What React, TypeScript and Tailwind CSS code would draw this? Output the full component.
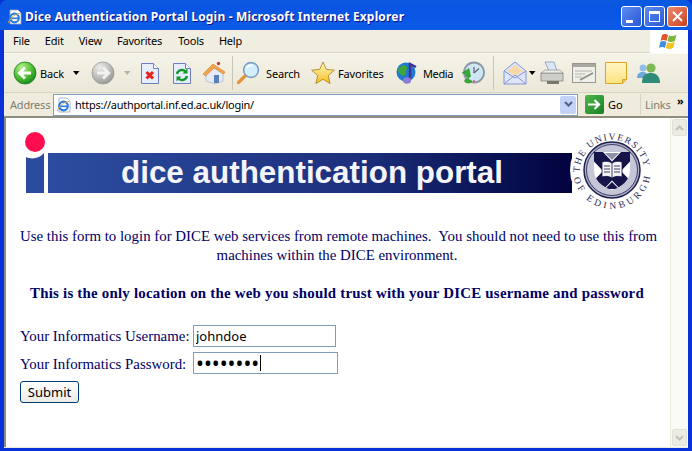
// Internet Explorer 6 on XP showing the DICE authentication portal login page
import type { ReactNode } from 'react'

const UI_FONT = "font-['Noto_Sans','DejaVu_Sans',sans-serif]"

function Icon({ w = 24, h = 24, className = '', children }: { w?: number; h?: number; className?: string; children: ReactNode }) {
  return (
    <svg width={w} height={h} viewBox={`0 0 ${w} ${h}`} className={`shrink-0 ${className}`}>
      {children}
    </svg>
  )
}

function IeLogo({ size = 16 }: { size?: number }) {
  return (
    <svg width={size} height={size} viewBox="0 0 16 16" className="shrink-0">
      <path d="M3 1h8l3 3v11H3z" fill="#fff" stroke="#8fa3c8" strokeWidth="0.8" />
      <circle cx="7.500" cy="9" r="4.300" fill="none" stroke="#2a7de1" strokeWidth="2.200" />
      <path d="M3.500 9.300h8" stroke="#2a7de1" strokeWidth="1.600" />
      <path d="M1 14c3-6 7-9 12-9.500" fill="none" stroke="#e8a33a" strokeWidth="1" />
    </svg>
  )
}

function RoundArrow({ disabled }: { disabled?: boolean }) {
  const id = disabled ? 'fwd' : 'back'
  return (
    <Icon w={24} h={24}>
      <defs>
        <radialGradient id={id} cx="0.35" cy="0.25" r="0.85">
          <stop offset="0" stopColor={disabled ? '#ececea' : '#b6f08a'} />
          <stop offset="0.6" stopColor={disabled ? '#b8b8b4' : '#46b82e'} />
          <stop offset="1" stopColor={disabled ? '#8f8f8c' : '#0f7d1c'} />
        </radialGradient>
      </defs>
      <circle cx="12" cy="12" r="11" fill={`url(#${id})`} stroke={disabled ? '#9a9a96' : '#1a7a1e'} strokeWidth="0.8" />
      {disabled ? (
        <path d="M6 12h11M12 6.500 17.500 12 12 17.500" fill="none" stroke="#f2f2f0" strokeWidth="3" />
      ) : (
        <path d="M18 12H7M12 6.500 6.500 12 12 17.500" fill="none" stroke="#fff" strokeWidth="3" />
      )}
    </Icon>
  )
}

function Caret({ dim }: { dim?: boolean }) {
  return (
    <Icon w={7} h={4}>
      <path d="M0 0h6.500L3.200 4z" fill={dim ? '#b5b3a6' : '#000'} />
    </Icon>
  )
}

function StopIcon() {
  return (
    <Icon w={20} h={24}>
      <path d="M1.500 2.500h12l5 5v15h-17z" fill="#e6eefb" stroke="#6d7fc0" />
      <path d="M13.500 2.500v5h5" fill="#fff" stroke="#6d7fc0" />
      <path d="M6.500 11l6.500 6.500M13 11l-6.500 6.500" stroke="#e8221a" strokeWidth="3" />
    </Icon>
  )
}

function RefreshIcon() {
  return (
    <Icon w={20} h={24}>
      <path d="M1.500 2.500h12l5 5v15h-17z" fill="#e6eefb" stroke="#6d7fc0" />
      <path d="M13.500 2.500v5h5" fill="#fff" stroke="#6d7fc0" />
      <path d="M5 13a5 5 0 0 1 8.500-2.500M15 15a5 5 0 0 1-8.500 2.500" fill="none" stroke="#12982a" strokeWidth="2.400" />
      <path d="M15.500 7.500v5h-5zM4.500 20.500v-5h5z" fill="#12982a" />
    </Icon>
  )
}

function HomeIcon() {
  return (
    <Icon w={24} h={24}>
      <path d="M4 12v8l9 3 8-3v-9l-8-5z" fill="#e4ebf7" stroke="#9aa8c4" strokeWidth="0.6" />
      <path d="M1 13 11 3l12 8-1.500 2L12 7l-8.500 8z" fill="#f3a64e" stroke="#d9822f" strokeWidth="0.7" />
      <circle cx="16.500" cy="2.500" r="1.700" fill="#b8452e" />
      <rect x="12" y="14" width="5" height="8" fill="#5c7fb8" />
    </Icon>
  )
}

function SearchIcon() {
  return (
    <Icon w={24} h={24}>
      <path d="M10 14 2.500 21.500" stroke="#e0953c" strokeWidth="3.200" strokeLinecap="round" />
      <circle cx="15" cy="9" r="7.400" fill="#d4eefb" stroke="#7c9fc4" strokeWidth="1.600" />
      <path d="M11 7a5 5 0 0 1 5-2.500" fill="none" stroke="#fff" strokeWidth="1.800" />
    </Icon>
  )
}

function StarIcon() {
  return (
    <Icon w={24} h={24}>
      <defs>
        <linearGradient id="star" x1="0" y1="0" x2="0" y2="1">
          <stop offset="0" stopColor="#fffbc0" />
          <stop offset="1" stopColor="#f6bd22" />
        </linearGradient>
      </defs>
      <path d="M12 1l3.300 7.400 8 .8-6 5.300 1.800 8L12 18.300l-7.100 4.200 1.800-8-6-5.300 8-.8z" fill="url(#star)" stroke="#a87a14" strokeWidth="0.8" />
    </Icon>
  )
}

function MediaIcon() {
  return (
    <Icon w={24} h={24}>
      <circle cx="10" cy="11" r="9.500" fill="#1f78d1" />
      <path d="M3 7c3-4 7-3 8-1s-2 4-1 6-3 4-5 2-4-5-2-7z" fill="#3fa53a" />
      <path d="M14 19V3l6 3" fill="none" stroke="#43358f" strokeWidth="2.400" />
      <ellipse cx="11" cy="19.500" rx="4" ry="3.200" fill="#8d7bd8" />
    </Icon>
  )
}

function HistoryIcon() {
  return (
    <Icon w={24} h={24}>
      <circle cx="13" cy="11.500" r="10" fill="#cfe6f5" stroke="#8b97a6" strokeWidth="1.800" />
      <path d="M13 12l5-4.500" stroke="#58616d" strokeWidth="1.200" />
      <path d="M13 12v-6" stroke="#58616d" strokeWidth="1.200" />
      <circle cx="13" cy="20" r="1" fill="#d8553a" />
      <path d="M1 12h3c.300 3 2 4.500 3.500 5l-1 1c-2.500 0-3.500 1-2.500 3 3 2 6 1 7-1-1.500-.5-3-1-4-3l2.500-1.500-1.500-8z" fill="#35ab2c" stroke="#1f7f22" strokeWidth="0.500" />
    </Icon>
  )
}

function MailIcon() {
  return (
    <Icon w={24} h={24}>
      <path d="M1 10 12 1l11 9v13H1z" fill="#dde6fb" stroke="#8593d3" />
      <path d="M4 10l8-6 8 6-8 5z" fill="#f7d9a8" />
      <path d="M1 23l11-9 11 9M1 10l11 7 11-7" fill="none" stroke="#8593d3" />
    </Icon>
  )
}

function PrintIcon() {
  return (
    <Icon w={24} h={24}>
      <path d="M5 1h9l3 9H9z" fill="#dbe6fb" stroke="#8d96b8" strokeWidth="0.800" />
      <path d="M1 12h22v8H1z" fill="#cfcfca" stroke="#85857f" strokeWidth="0.800" />
      <path d="M1 12l4-3h15l3 3z" fill="#ececE6" stroke="#85857f" strokeWidth="0.600" />
      <path d="M7 20h12v3H7z" fill="#77776f" />
    </Icon>
  )
}

function EditIcon() {
  return (
    <Icon w={24} h={20}>
      <rect x="0.500" y="0.500" width="23" height="19" fill="#efefe9" stroke="#98968c" />
      <rect x="1" y="1" width="22" height="3" fill="#a9a79e" />
      <path d="M3 8h17M3 11h10M3 14h7" stroke="#b5b3aa" />
      <path d="M8 17l13-7" stroke="#8b8a84" strokeWidth="1.600" />
    </Icon>
  )
}

function NoteIcon() {
  return (
    <Icon w={22} h={22}>
      <defs>
        <linearGradient id="note" x1="0" y1="0" x2="0" y2="1">
          <stop offset="0" stopColor="#fff6c4" />
          <stop offset="1" stopColor="#fde283" />
        </linearGradient>
      </defs>
      <path d="M0.500 0.500h21v17l-4 4h-17z" fill="url(#note)" stroke="#d9a520" />
      <path d="M17.500 21.500v-4h4" fill="#f0c552" stroke="#d9a520" />
    </Icon>
  )
}

function MessengerIcon() {
  return (
    <Icon w={24} h={22}>
      <circle cx="7" cy="6" r="3.400" fill="#8fc0ea" />
      <path d="M1 16c0-5 3-6 6-6s5 2 5 6z" fill="#6fa9dc" />
      <circle cx="15" cy="6" r="4.600" fill="#7db852" />
      <path d="M6 21c0-8 4-10 9-10s9 3 9 10z" fill="#2f8a78" />
    </Icon>
  )
}

function ToolLabel({ children, className = '' }: { children: ReactNode; className?: string }) {
  return <span className={`text-[11px] leading-none text-black ${className}`}>{children}</span>
}

function Crest() {
  return (
    <svg width="84" height="84" viewBox="0 0 84 84" className="relative -mb-[19px] -ml-[2px] -mt-[25px] shrink-0">
      <circle cx="42" cy="42" r="42" fill="#fff" />
      <defs>
        <path id="crest-top" d="M10 50A32.500 32.500 0 1 1 74 50" />
        <path id="crest-bottom" d="M3.500 48A39 39 0 0 0 80.500 48" />
        <clipPath id="crest-shield">
          <path d="M24 24h36v18c0 10-8 17-18 20-10-3-18-10-18-20z" />
        </clipPath>
      </defs>
      <text fontFamily="'Liberation Serif',serif" fontSize="9.500" letterSpacing="1.400" fill="#2b2b55">
        <textPath href="#crest-top" startOffset="5%">THE UNIVERSITY</textPath>
      </text>
      <text fontFamily="'Liberation Serif',serif" fontSize="9.500" letterSpacing="3.300" fill="#2b2b55">
        <textPath href="#crest-bottom" startOffset="2%">OF EDINBURGH</textPath>
      </text>
      <circle cx="42" cy="42" r="28" fill="#aeb0c8" stroke="#20204f" strokeWidth="1.500" />
      <circle cx="42" cy="42" r="25.500" fill="#c5c7d8" stroke="#20204f" strokeWidth="0.800" />
      <g clipPath="url(#crest-shield)">
        <rect x="24" y="24" width="36" height="38" fill="#fff" />
        <path d="M24 24l36 38M60 24 24 62" stroke="#15154a" strokeWidth="13" />
        <path d="M35 25h14l-7 7z" fill="#8f91a8" />
        <path d="M35 61h14l-7-7z" fill="#15154a" />
      </g>
      <path d="M32 34c3-1 7-1 10 1 3-2 7-2 10-1v15c-3-1-7-1-10 1-3-2-7-2-10-1z" fill="#f4f4f4" stroke="#15154a" strokeWidth="0.800" />
      <path d="M42 35v15M34 38h6M34 41h6M34 44h6M44 38h6M44 41h6M44 44h6" stroke="#15154a" strokeWidth="0.800" />
    </svg>
  )
}

function Banner() {
  return (
    <div className="ml-[5px] flex items-end">
      <svg width="20" height="61" viewBox="0 0 20 61" className="shrink-0">
        <circle cx="10" cy="10" r="10" fill="#ff0d50" />
        <path d="M1 61V25c6 3 14 1 18-4v40z" fill="#2b4b9f" />
      </svg>
      <div className="ml-[3px] flex h-[40px] w-[524px] items-center justify-center bg-gradient-to-r from-[#2c4da0] via-[#1d2f7c] via-60% to-[#03033f]">
        <span className="pl-[4px] font-['Liberation_Sans',sans-serif] text-[31.400px] font-bold leading-none text-[#f4f4fa]">
          dice authentication portal
        </span>
      </div>
      <Crest />
    </div>
  )
}

export default function App() {
  return (
    <div className={`flex h-[451px] w-[692px] flex-col overflow-hidden bg-[#0831d9] ${UI_FONT}`}>
      {/* Title bar */}
      <div className="flex h-[30px] shrink-0 items-center rounded-t-[7px] bg-gradient-to-b from-[#0a5ae0] via-[#0a55e3] via-30% to-[#0b5be8] pl-[7px] pr-[4px] pt-[3px]">
        <IeLogo />
        <span className="ml-[2px] whitespace-nowrap text-[12px] font-bold leading-none tracking-[0.17px] text-white [text-shadow:1px_1px_0_#0f1089]">
          Dice Authentication Portal Login - Microsoft Internet Explorer
        </span>
        <div className="ml-auto flex gap-[2px]">
          <div className="flex h-[21px] w-[21px] items-end rounded-[3px] border border-white bg-gradient-to-br from-[#5d8cf0] to-[#2a56d6] pb-[3px] pl-[4px]">
            <div className="h-[3px] w-[7px] bg-white" />
          </div>
          <div className="flex h-[21px] w-[21px] items-center justify-center rounded-[3px] border border-white bg-gradient-to-br from-[#5d8cf0] to-[#2a56d6]">
            <div className="h-[11px] w-[11px] border border-t-[3px] border-white" />
          </div>
          <div className="flex h-[21px] w-[21px] items-center justify-center rounded-[3px] border border-white bg-gradient-to-br from-[#ec8a6c] to-[#c9401c]">
            <svg width="11" height="11" viewBox="0 0 11 11">
              <path d="M1 1l9 9M10 1l-9 9" stroke="#fff" strokeWidth="2" />
            </svg>
          </div>
        </div>
      </div>

      <div className="mx-[4px] flex min-h-0 flex-1 flex-col bg-[#ece9d8]">
        {/* Menu bar */}
        <div className="flex h-[23px] shrink-0 items-center border-b border-[#d8d4c2] bg-[#f0eee1] text-[11px] tracking-[-0.2px] text-black">
          <div className="flex items-center pl-[9px]">
            <span>File</span>
            <span className="ml-[15px]">Edit</span>
            <span className="ml-[15px]">View</span>
            <span className="ml-[15px]">Favorites</span>
            <span className="ml-[16px]">Tools</span>
            <span className="ml-[15px]">Help</span>
          </div>
          <div className="ml-auto flex h-[23px] w-[38px] items-center justify-center bg-white">
            <svg width="20" height="18" viewBox="0 0 20 18">
              <path d="M3 3c2-1.500 4-1.500 6 0L7.500 9c-2-1.200-4-1.200-6 0z" fill="#e2542a" />
              <path d="M10 3.300c2 1.300 4 1.300 7.500-.5L16 8.800c-3 1.500-5 1.500-7.500.3z" fill="#7cb53a" />
              <path d="M1.300 10c2-1.200 4-1.200 6 0L6 16c-2-1.200-4-1.200-6 0z" fill="#3f8fe0" />
              <path d="M8.300 10.300c2 1.200 4 1.200 7.500-.5L14.300 15.800c-3 1.500-5 1.500-7.500.3z" fill="#f3c325" />
            </svg>
          </div>
        </div>

        {/* Standard buttons */}
        <div className="flex h-[40px] shrink-0 items-center border-b border-t border-b-[#d8d4c2] border-t-[#fbfaf3] bg-gradient-to-b from-[#f5f3e8] to-[#ebe8d8] pl-[9px]">
          <RoundArrow />
          <ToolLabel className="ml-[3px] w-[25px] tracking-[-0.1px]">Back</ToolLabel>
          <div className="ml-[8px]"><Caret /></div>
          <div className="ml-[11px]"><RoundArrow disabled /></div>
          <div className="ml-[9px]"><Caret dim /></div>
          <div className="ml-[9px]"><StopIcon /></div>
          <div className="ml-[12px]"><RefreshIcon /></div>
          <div className="ml-[10px]"><HomeIcon /></div>
          <div className="ml-[6px] h-[34px] w-px bg-[#c9c6b5]" />
          <div className="ml-[3px]"><SearchIcon /></div>
          <ToolLabel className="ml-[6px] w-[34px] tracking-[-0.15px]">Search</ToolLabel>
          <div className="ml-[11px]"><StarIcon /></div>
          <ToolLabel className="ml-[3px] w-[46px] tracking-[-0.15px]">Favorites</ToolLabel>
          <div className="ml-[12px]"><MediaIcon /></div>
          <ToolLabel className="ml-[3px] w-[28px] tracking-[-0.4px]">Media</ToolLabel>
          <div className="ml-[10px]"><HistoryIcon /></div>
          <div className="ml-[8px] h-[34px] w-px bg-[#c9c6b5]" />
          <div className="ml-[9px]"><MailIcon /></div>
          <div className="ml-[2px]"><Caret /></div>
          <div className="ml-[4px]"><PrintIcon /></div>
          <div className="ml-[8px]"><EditIcon /></div>
          <div className="ml-[9px]"><NoteIcon /></div>
          <div className="ml-[9px]"><MessengerIcon /></div>
        </div>

        {/* Address bar */}
        <div className="flex h-[23px] shrink-0 items-center bg-[#efecdd] text-[11px] leading-none">
          <span className="ml-[6px] w-[43px] tracking-[-0.2px] text-[#7f7c6d]">Address</span>
          <div className="flex h-[22px] w-[525px] items-center border border-[#7f9db9] bg-white pl-[2px]">
            <IeLogo />
            <span className="ml-[3px] tracking-[-0.26px] text-black">https://authportal.inf.ed.ac.uk/login/</span>
            <div className="ml-auto mr-[1px] flex h-[18px] w-[16px] items-center justify-center rounded-[2px] bg-[#c3d3f7]">
              <svg width="9" height="7" viewBox="0 0 9 7">
                <path d="M1 1l3.500 3.500L8 1" fill="none" stroke="#4d6185" strokeWidth="2" />
              </svg>
            </div>
          </div>
          <div className="ml-[7px] flex h-[19px] w-[19px] items-center justify-center rounded-[2px] bg-gradient-to-br from-[#4fb84a] to-[#137f27]">
            <svg width="13" height="11" viewBox="0 0 13 11">
              <path d="M0 5.500h10M6.500 1l4.500 4.500L6.500 10" fill="none" stroke="#fff" strokeWidth="2.200" />
            </svg>
          </div>
          <span className="ml-[4px] w-[15px] text-black">Go</span>
          <div className="ml-[17px] h-[21px] w-px bg-[#d8d4c2]" />
          <span className="ml-[4px] w-[24px] tracking-[-0.2px] text-[#7f7c6d]">Links</span>
          <span className="-mt-[8px] ml-[8px] text-[11px] font-bold leading-none tracking-[-1px] text-black">»</span>
        </div>

        {/* Viewport */}
        <div className="flex min-h-0 flex-1 border-l-2 border-t-2 border-[#8f8d80] bg-white">
          <main className="min-w-0 flex-1 pl-[14px] pr-[16px] pt-[14px] font-['Liberation_Serif',serif] text-[14.880px] leading-[19px] text-[#000066]">
            <Banner />
            <p className="mt-[34px] whitespace-nowrap text-center">
              Use this form to login for DICE web services from remote machines.&nbsp; You should not need to use this from
              <br />
              machines within the DICE environment.
            </p>
            <p className="mt-[19px] whitespace-nowrap text-center font-bold tracking-[0.23px]">
              This is the only location on the web you should trust with your DICE username and password
            </p>
            <form className="mt-[22px]">
              <div className="flex h-[22px] items-center">
                <label className="w-[173px] whitespace-nowrap">Your Informatics Username:</label>
                <input
                  readOnly
                  value="johndoe"
                  className={`h-[22px] w-[143px] border border-[#7f9db9] px-[2px] text-[13px] text-black outline-none ${UI_FONT}`}
                />
              </div>
              <div className="mt-[6px] flex h-[22px] items-center">
                <label className="w-[173px] whitespace-nowrap">Your Informatics Password:</label>
                <div className="relative">
                  <input
                    readOnly
                    type="password"
                    value="johndoe1"
                    className={`h-[22px] w-[145px] border border-[#7f9db9] px-[2px] text-[21px] leading-none text-black outline-none ${UI_FONT}`}
                  />
                  <div className="absolute left-[67px] top-[3px] h-[16px] w-px bg-black" />
                </div>
              </div>
              <button
                type="button"
                className={`mt-[6px] block h-[22px] w-[59px] rounded-[3px] border border-[#003c74] bg-gradient-to-b from-white to-[#ecebe5] text-[13px] leading-none text-black ${UI_FONT}`}
              >
                Submit
              </button>
            </form>
          </main>

          {/* Scrollbar */}
          <div className="flex w-[18px] shrink-0 flex-col justify-between border-l border-[#ece9d8] bg-[#fbfbf6] p-px">
            <div className="flex h-[17px] items-center justify-center rounded-[2px] border border-[#e3e1d5] bg-[#ecebe2]">
              <svg width="9" height="6" viewBox="0 0 9 6">
                <path d="M1 5l3.500-3.500L8 5" fill="none" stroke="#c1c0b6" strokeWidth="2" />
              </svg>
            </div>
            <div className="flex h-[17px] items-center justify-center rounded-[2px] border border-[#e3e1d5] bg-[#ecebe2]">
              <svg width="9" height="6" viewBox="0 0 9 6">
                <path d="M1 1l3.500 3.500L8 1" fill="none" stroke="#c1c0b6" strokeWidth="2" />
              </svg>
            </div>
          </div>
        </div>
        <div className="h-[1px] shrink-0 bg-[#ece9d8]" />
      </div>
      <div className="h-[3px] shrink-0" />
    </div>
  )
}
